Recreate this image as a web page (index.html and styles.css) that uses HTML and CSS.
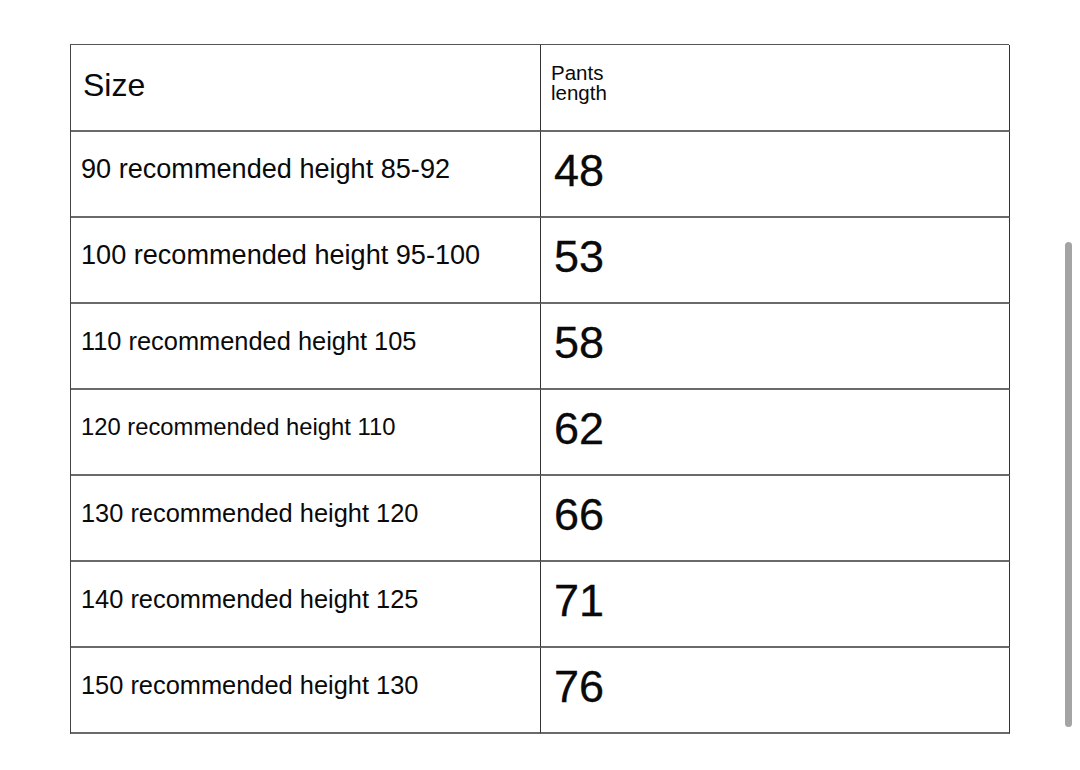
FILE: index.html
```html
<!DOCTYPE html>
<html lang="en">
<head>
<meta charset="utf-8">
<title>Size chart</title>
<link rel="stylesheet" href="styles.css">
</head>
<body>
<main class="page">
  <div class="chart">
    <div class="cell head"><span class="size-title">Size</span></div>
    <div class="cell head right"><span class="len-title">Pants<br>length</span></div>

    <div class="cell"><span class="label fs27">90 recommended height 85-92</span></div>
    <div class="cell right"><span class="num">48</span></div>

    <div class="cell"><span class="label fs27">100 recommended height 95-100</span></div>
    <div class="cell right"><span class="num">53</span></div>

    <div class="cell"><span class="label fs25">110 recommended height 105</span></div>
    <div class="cell right"><span class="num">58</span></div>

    <div class="cell"><span class="label fs23">120 recommended height 110</span></div>
    <div class="cell right"><span class="num">62</span></div>

    <div class="cell"><span class="label fs25">130 recommended height 120</span></div>
    <div class="cell right"><span class="num">66</span></div>

    <div class="cell"><span class="label fs25">140 recommended height 125</span></div>
    <div class="cell right"><span class="num">71</span></div>

    <div class="cell"><span class="label fs25">150 recommended height 130</span></div>
    <div class="cell right"><span class="num">76</span></div>
  </div>
  <div class="scrollbar"></div>
</main>
</body>
</html>
```

FILE: styles.css
```css
* { box-sizing: border-box; }
html, body {
  margin: 0;
  padding: 0;
  background: #ffffff;
}
body {
  font-family: "Liberation Sans", Arial, sans-serif;
  color: #0a0a0a;
  width: 1080px;
  height: 770px;
  overflow: hidden;
}
.page {
  position: relative;
  width: 1080px;
  height: 770px;
  padding: 44px 0 0 70px;
}
.chart {
  width: 939px;
  display: grid;
  grid-template-columns: 470px 469px;
  grid-template-rows: 87px repeat(7, 86px);
  border-top: 1px solid #555555;
  border-left: 1px solid #444444;
}
.cell {
  display: flex;
  align-items: center;
  padding: 0 0 10px 10px;
  border-right: 1px solid #333333;
  border-bottom: 2px solid #6a6a6a;
}
.cell.right {
  padding-left: 10px;
  padding-bottom: 7px;
}
.cell.head {
  padding-bottom: 4px;
}
.size-title {
  font-size: 32px;
  padding-left: 2px;
}
.len-title {
  font-size: 20.5px;
  line-height: 20px;
  padding-bottom: 6px;
}
.label { white-space: nowrap; }
.fs27 { font-size: 27.1px; }
.fs25 { font-size: 25.4px; }
.fs23 { font-size: 23.8px; }
.num {
  font-size: 45px;
  padding-left: 3px;
  -webkit-text-stroke: 0.3px #0a0a0a;
}
.scrollbar {
  position: absolute;
  left: 1065px;
  top: 242px;
  width: 7px;
  height: 485px;
  border-radius: 4px;
  background: #a4a4a4;
}
```
